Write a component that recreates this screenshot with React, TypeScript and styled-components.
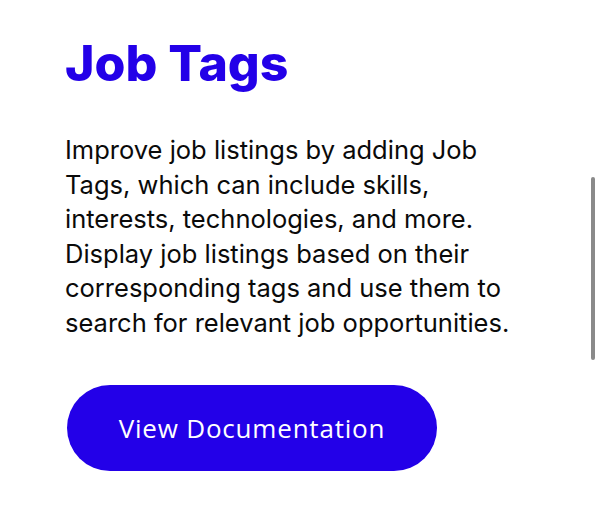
import * as React from "react";
import styled, { createGlobalStyle } from "styled-components";

const GlobalStyle = createGlobalStyle`
  html, body {
    margin: 0;
    padding: 0;
    background: #ffffff;
  }
  body {
    font-family: "Inter", "Liberation Sans", sans-serif;
  }
`;

const BRAND = "#2300e8";

export default function App() {
  return (
    <>
      <GlobalStyle />
      <Page>
        <Section>
          <Title>Job Tags</Title>
          <Description>
            Improve job listings by adding Job Tags, which can include skills,
            interests, technologies, and more. Display job listings based on
            their corresponding tags and use them to search for relevant job
            opportunities.
          </Description>
          <DocButton type="button">View Documentation</DocButton>
        </Section>
        <ScrollThumb />
      </Page>
    </>
  );
}

const Page = styled.div`
  position: relative;
  width: 600px;
  height: 518px;
  overflow: hidden;
`;

const Section = styled.section`
  display: flex;
  flex-direction: column;
  align-items: flex-start;
  padding: 33px 0 0 65px;
  width: 462px;
`;

const Title = styled.h1`
  margin: 0;
  font-family: "Inter", sans-serif;
  font-weight: 800;
  font-size: 50px;
  line-height: 60px;
  letter-spacing: 0;
  color: ${BRAND};
`;

const Description = styled.p`
  margin: 40px 0 0;
  font-size: 25.5px;
  line-height: 34.6px;
  color: #0a0a0a;
`;

const DocButton = styled.button`
  margin: 44px 0 0 2px;
  width: 370px;
  height: 86px;
  border: none;
  border-radius: 43px;
  background: ${BRAND};
  color: #ffffff;
  font-family: "Open Sans", "Inter", sans-serif;
  font-size: 26px;
  font-weight: 400;
  letter-spacing: 0.8px;
  cursor: pointer;
`;

const ScrollThumb = styled.div`
  position: absolute;
  top: 177px;
  left: 591px;
  width: 4px;
  height: 183px;
  border-radius: 2px;
  background: #8a8a8a;
`;
